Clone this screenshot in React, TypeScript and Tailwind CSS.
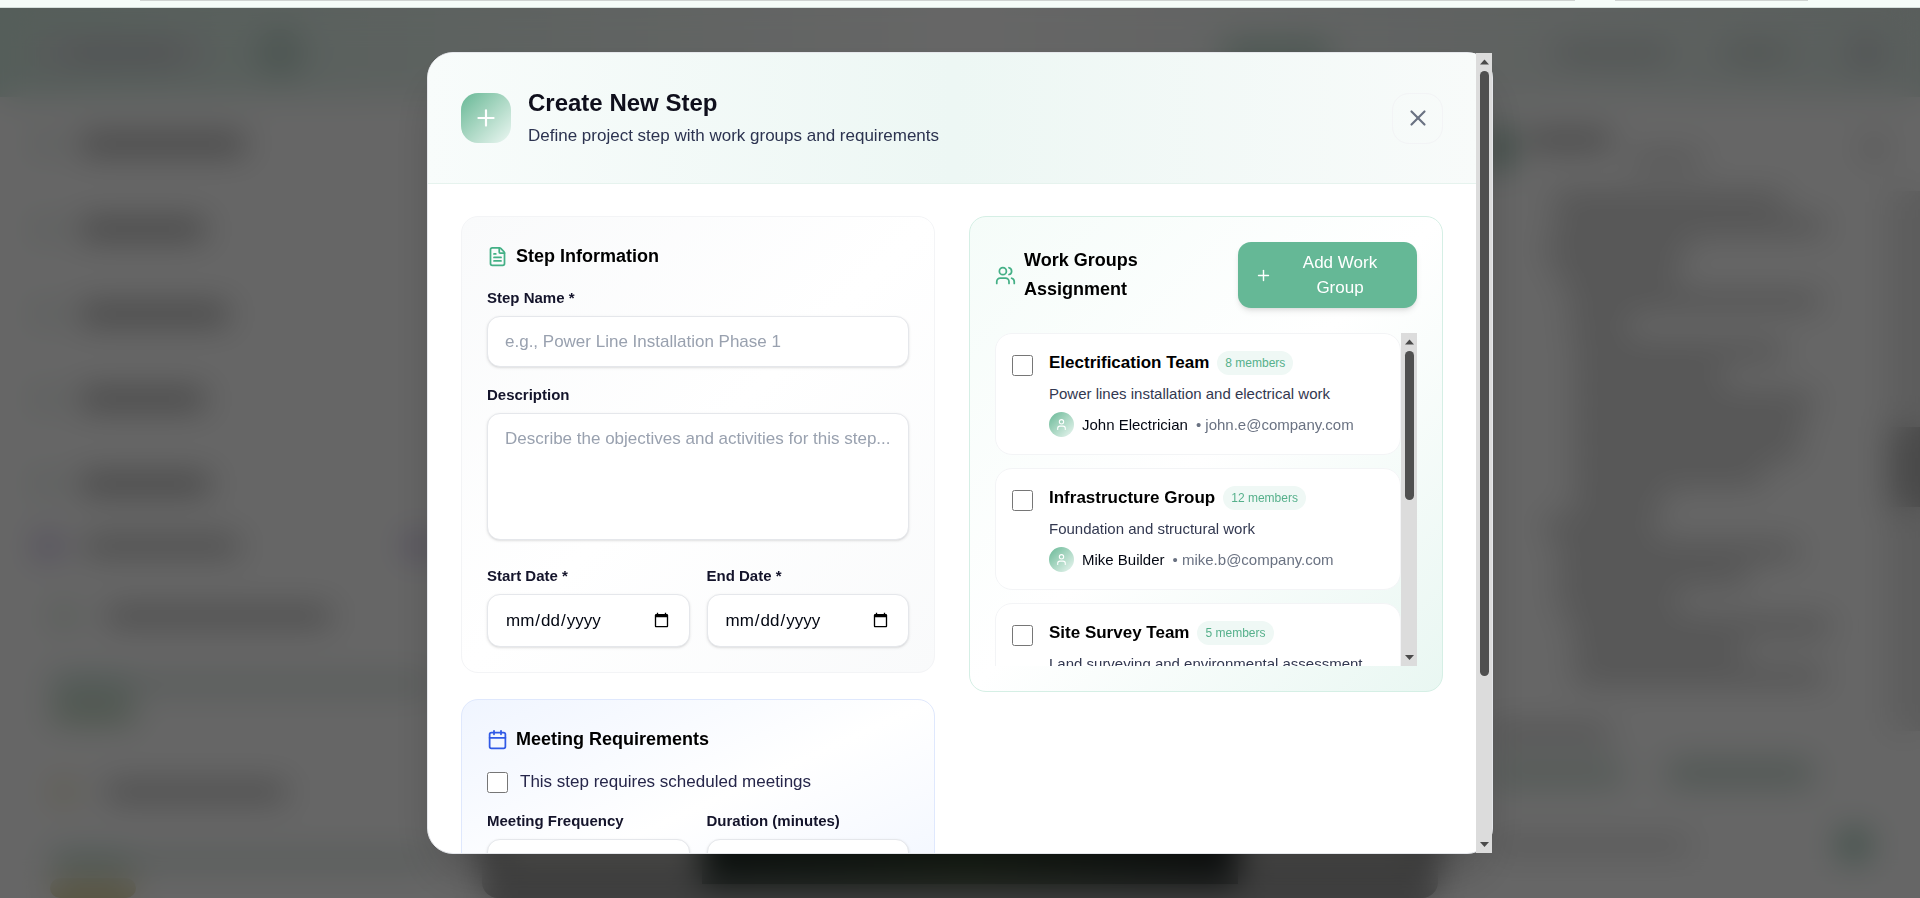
import { Calendar, FileText, Plus, User, Users, X } from 'lucide-react';
import { useEffect, useRef, useState } from 'react';
import type { ReactNode } from 'react';

type Group = { name: string; members: number; about: string; lead: string; email: string };

const groups: Group[] = [
  { name: 'Electrification Team', members: 8, about: 'Power lines installation and electrical work', lead: 'John Electrician', email: 'john.e@company.com' },
  { name: 'Infrastructure Group', members: 12, about: 'Foundation and structural work', lead: 'Mike Builder', email: 'mike.b@company.com' },
  { name: 'Site Survey Team', members: 5, about: 'Land surveying and environmental assessment', lead: 'Sarah Survey', email: 'sarah.s@company.com' },
];

const field =
  'block w-full rounded-[13px] border border-gray-200 bg-white px-[17px] text-[17px] text-gray-950 shadow-sm placeholder:text-gray-400';
const labelText = 'mb-2 block text-[15px] leading-[21px] font-bold text-[#14142b]';
const heading = 'text-lg leading-[29px] font-bold text-black';

/* A scrolling region with an always-visible arrow scroll bar on its right. */
function ScrollPane({ className, contentClass, children }: { className: string; contentClass: string; children: ReactNode }) {
  const pane = useRef<HTMLDivElement>(null);
  const [thumb, setThumb] = useState({ size: 50, start: 0 });

  const measure = () => {
    const el = pane.current;
    if (!el) return;
    setThumb({
      size: (el.clientHeight / el.scrollHeight) * 100,
      start: (el.scrollTop / el.scrollHeight) * 100,
    });
  };

  useEffect(() => {
    measure();
    window.addEventListener('resize', measure);
    return () => window.removeEventListener('resize', measure);
  }, []);

  return (
    <div className={`flex min-h-0 ${className}`}>
      <div ref={pane} onScroll={measure} className={`min-w-0 flex-1 overflow-y-auto [scrollbar-width:none] ${contentClass}`}>
        {children}
      </div>
      <div aria-hidden="true" className="flex w-4 shrink-0 flex-col items-center bg-[#dcdcdc]">
        <svg viewBox="0 0 15 18" className="h-[18px] w-[15px] shrink-0"><path d="M3 11.5 7.5 6.5 12 11.5z" fill="#4a4a4a" /></svg>
        <div className="min-h-0 w-[9px] flex-1">
          <div style={{ height: `${thumb.start}%` }} />
          <div className="rounded-full bg-[#505050]" style={{ height: `${thumb.size}%` }} />
        </div>
        <svg viewBox="0 0 15 18" className="h-[18px] w-[15px] shrink-0"><path d="M3 7 7.5 12 12 7z" fill="#4a4a4a" /></svg>
      </div>
    </div>
  );
}

function Field({ id, label, children }: { id: string; label: string; children: ReactNode }) {
  return (
    <div className="min-w-0">
      <label htmlFor={id} className={labelText}>{label}</label>
      {children}
    </div>
  );
}

const groupBox = 'rounded-[17px] border border-gray-100 bg-white';

function GroupCard({ group, id }: { group: Group; id: string }) {
  return (
    <li className={`${groupBox} flex items-start gap-4 px-4 py-[17px]`}>
      <input id={id} type="checkbox" className="mt-1 size-[21px] shrink-0" />
      <div className="min-w-0">
        <div className="mb-2 flex items-center gap-2">
          <label htmlFor={id} className="text-[17px] leading-6 font-bold text-black">{group.name}</label>
          <span className="rounded-full bg-[#eff8f5] px-2 text-xs leading-6 text-[#55b08b]">{group.members} members</span>
        </div>
        <p className="mb-2 text-[15px] leading-[21px] text-[#323850]">{group.about}</p>
        <div className="flex items-center gap-2 text-[15px] leading-[25px]">
          <span className="flex size-[25px] items-center justify-center rounded-full bg-linear-to-br from-[#65b896] to-[#ecf7f3]">
            <User size={13} className="text-white" />
          </span>
          <span className="text-gray-950">{group.lead}</span>
          <span className="text-gray-500">• {group.email}</span>
        </div>
      </div>
    </li>
  );
}

const sidebarRows = ['w-[165px]', 'w-[125px]', 'w-[148px]', 'w-[125px]', 'w-[130px]'];

const messageLines = [
  'ml-2 w-[230px]', 'ml-2 w-[270px]', 'ml-0 w-[140px]', 'ml-3 w-[120px]', 'ml-6 w-[250px]', 'ml-6 w-[60px]',
  'ml-7 w-[210px]', 'ml-7 w-[150px]', 'ml-7 w-[240px]', 'ml-7 w-[230px]', 'ml-7 w-[225px]', 'ml-7 w-[190px]',
  'ml-7 w-[90px]', 'ml-0 w-[110px]', 'ml-3 w-[240px]', 'ml-3 w-[190px]', 'ml-3 w-[120px]', 'ml-6 w-[260px]',
  'ml-7 w-[170px]', 'ml-7 w-[250px]',
];

function ProjectSkeleton({ dot, name, badge }: { dot: string; name: string; badge: string }) {
  return (
    <div className="h-[176px] pl-[50px]">
      <div className="flex items-center gap-8 pl-1">
        <span className={`size-5 rounded-full ${dot}`} />
        <span className={`h-4 rounded bg-[#b0b0b0] ${name}`} />
      </div>
      <div className="mt-[52px] flex h-3 rounded-full bg-[#c8d8d2]"><span className="w-20 rounded-full bg-[#9cc4b3]" /></div>
      <div className={`mt-3 h-5 w-[86px] rounded-full ${badge}`} />
    </div>
  );
}

/* The dashboard below the dialog, visible only as soft shapes. */
function Backdrop() {
  return (
    <div aria-hidden="true" className="flex h-full flex-col bg-white">
      <div className="flex h-2 shrink-0 gap-10 border-b border-[#d5dfdb] bg-[#f5fcf8] pr-28 pl-[140px]">
        <span className="flex-1 border-t border-[#cfd3d1]" />
        <span className="w-[193px] border-t border-[#cfd3d1]" />
      </div>
      <div className="mb-1 flex h-[89px] shrink-0 items-center bg-linear-to-r from-[#d4ebe1] via-white to-[#dfece7] pr-10 pl-8">
        <span className="h-9 w-44 rounded-xl bg-[#dce2e2] p-3"><span className="ml-6 block h-3 w-28 rounded bg-[#bfc3c8]" /></span>
        <span className="ml-12 size-12 rounded-full bg-[#c0d6cd]" />
        <span className="ml-auto h-6 w-28 rounded-full bg-[#b4d4c6]" />
        <span className="ml-56 h-4 w-28 rounded bg-[#c4cccb]" />
        <span className="ml-14 h-4 w-16 rounded bg-[#c4ceca]" />
        <span className="ml-16 size-7 rounded-full bg-[#c4c6cc]" />
      </div>
      <div className="flex min-h-0 flex-1">
        <div className="w-[430px] shrink-0 overflow-hidden">
          {sidebarRows.map((width, index) => (
            <div key={index} className="flex h-[85px] items-center gap-6 pl-9">
              <span className="size-5 rounded-full bg-[#d3e4dc]" />
              <span className={`h-[18px] rounded bg-[#a4a4a4] ${width}`} />
            </div>
          ))}
          <div className="mb-10 flex h-10 items-center gap-6 pl-9">
            <span className="size-6 rounded-full bg-[#bba8de]" />
            <span className="h-4 w-[155px] rounded bg-[#b2b2b2]" />
            <span className="ml-auto size-6 rounded-full bg-[#bba8de]" />
          </div>
          <ProjectSkeleton dot="bg-[#c0d8c4]" name="w-[225px]" badge="bg-[#b4ceb4]" />
          <ProjectSkeleton dot="bg-[#e5d6a0]" name="w-[180px]" badge="bg-[#ded6a8]" />
        </div>
        <div className="flex min-w-0 flex-1 flex-col justify-end px-[52px]">
          <div className="flex h-[90px] items-start rounded-b-2xl bg-[#a0a0a0] px-5 pb-5">
            <span className="h-14 w-[200px] bg-[#d8d8d2]" />
            <span className="h-[76px] flex-1 bg-linear-to-r from-[#26332e] via-[#34452f] to-[#262c2c]" />
            <span className="h-14 w-[180px] bg-[#c8c8c4]" />
          </div>
        </div>
        <div className="flex w-[430px] shrink-0">
          <div className="min-w-0 flex-1">
            <div className="flex h-[94px] items-center pr-1">
              <span className="h-12 w-5 rounded-xl bg-[#7fae99]" />
              <span className="ml-4 mb-4 h-4 w-[85px] rounded bg-[#a8a8a8]" />
              <span className="ml-5 mt-6 h-3 w-[70px] rounded bg-[#c4c4c4]" />
              <span className="ml-auto size-5 rounded-full bg-[#c4c4c4]" />
            </div>
            <div className="flex h-[520px] flex-col gap-[13px] overflow-hidden pl-14">
              {messageLines.map((line, index) => (
                <span key={index} className={`h-3 shrink-0 rounded bg-[#b4b4b4] ${line}`} />
              ))}
            </div>
            <div className="mt-3 h-3 w-[120px] rounded bg-[#b8b8b8]" />
            <div className="mt-5 flex gap-10">
              <span className="h-7 w-[135px] rounded-full bg-[#d3e2da]" />
              <span className="h-7 w-[150px] rounded-full bg-[#cbdbd3]" />
            </div>
            <div className="mt-10 flex items-center pr-4">
              <span className="h-3 w-[200px] rounded bg-[#cccccc]" />
              <span className="ml-auto size-9 rounded-full bg-[#a5cbba]" />
            </div>
          </div>
          <div className="mt-[90px] h-[540px] w-8 bg-[#e8e8e8] pt-[236px]"><div className="h-[80px] w-8 bg-[#b8b8b8]" /></div>
        </div>
      </div>
    </div>
  );
}

export default function App() {
  return (
    <div className="relative h-screen overflow-hidden font-['Liberation_Sans',Arial,sans-serif]">
      <Backdrop />
      <div className="absolute inset-x-0 top-2 bottom-0 flex items-center justify-center bg-black/60 backdrop-blur-lg">
        <section
          role="dialog"
          aria-labelledby="dialog-title"
          className="flex max-h-[calc(100%-88px)] w-full max-w-[1066px] rounded-[26px] border border-gray-200 bg-white shadow-2xl"
        >
          <ScrollPane className="flex-1" contentClass="rounded-l-[25px] rounded-r-[3px]">
            <header className="flex items-center justify-between border-b border-[#e6f3ee] bg-linear-to-r from-[#f8fcfb] via-[#edf7f4] to-[#f8fbfa] px-[33px] py-8">
              <div className="flex items-center gap-[17px]">
                <span className="flex size-[50px] items-center justify-center rounded-[17px] bg-linear-to-br from-[#65b896] to-[#ecf7f3]">
                  <Plus size={26} className="text-white" />
                </span>
                <div>
                  <h2 id="dialog-title" className="text-2xl leading-9 font-bold text-[#0f0f1c]">Create New Step</h2>
                  <p className="text-[17px] leading-[30px] text-[#2c3350]">Define project step with work groups and requirements</p>
                </div>
              </div>
              <button type="button" aria-label="Close" className="flex size-[51px] items-center justify-center rounded-[17px] border border-gray-100 text-gray-500">
                <X size={26} />
              </button>
            </header>

            <div className="grid grid-cols-2 items-start gap-[34px] px-[33px] py-8">
              <div className="flex flex-col gap-[26px]">
                <section className="rounded-[17px] border border-gray-100 bg-linear-to-br from-[#f9fafb] via-white to-[#f9fafb] p-[25px]">
                  <div className="mb-4 flex items-center gap-2">
                    <FileText size={21} className="text-[#44b086]" />
                    <h3 className={heading}>Step Information</h3>
                  </div>
                  <div className="flex flex-col gap-[17px]">
                    <Field id="name" label="Step Name *">
                      <input id="name" type="text" placeholder="e.g., Power Line Installation Phase 1" className={`${field} h-[51px]`} />
                    </Field>
                    <Field id="description" label="Description">
                      <textarea id="description" placeholder="Describe the objectives and activities for this step..." className={`${field} mb-2 h-[127px] resize-none py-3 leading-[26px]`} />
                    </Field>
                    <div className="grid grid-cols-2 gap-[17px]">
                      <Field id="start" label="Start Date *">
                        <input id="start" type="date" className={`${field} h-[53px]`} />
                      </Field>
                      <Field id="end" label="End Date *">
                        <input id="end" type="date" className={`${field} h-[53px]`} />
                      </Field>
                    </div>
                  </div>
                </section>

                <section className="rounded-[17px] border border-[#dfe8fd] bg-linear-to-br from-[#f0f5ff] via-white to-[#f0f5ff] p-[25px]">
                  <div className="mb-4 flex items-center gap-2">
                    <Calendar size={21} className="text-[#3059e6]" />
                    <h3 className={heading}>Meeting Requirements</h3>
                  </div>
                  <label className="mb-4 flex items-center gap-3 text-[17px] leading-6 text-[#26264a]">
                    <input type="checkbox" className="size-[21px]" />
                    This step requires scheduled meetings
                  </label>
                  <div className="grid grid-cols-2 gap-[17px]">
                    <Field id="frequency" label="Meeting Frequency">
                      <select id="frequency" className={`${field} h-[51px] appearance-none`}><option>Weekly</option></select>
                    </Field>
                    <Field id="duration" label="Duration (minutes)">
                      <input id="duration" type="number" className={`${field} h-[51px]`} />
                    </Field>
                  </div>
                </section>
              </div>

              <section className="rounded-[17px] border border-[#d5efe5] bg-linear-to-br from-[#f5fcf9] via-white to-[#e9f7f2] p-[25px]">
                <div className="mb-[25px] flex items-center justify-between">
                  <div className="flex items-center gap-2">
                    <Users size={21} className="shrink-0 text-[#44b086]" />
                    <h3 className={`${heading} w-32`}>Work Groups Assignment</h3>
                  </div>
                  <button type="button" className="flex w-[179px] items-center gap-2 rounded-[13px] bg-[#65b896] px-[17px] py-2 text-[17px] leading-[25px] text-white shadow-md">
                    <Plus size={17} className="shrink-0" />
                    <span className="flex-1 px-3">Add Work Group</span>
                  </button>
                </div>
                <ScrollPane className="h-[333px]" contentClass="">
                  <ul className="flex flex-col gap-[13px]">
                    {groups.map((group, index) => (
                      <GroupCard key={group.name} group={group} id={`group-${index}`} />
                    ))}
                    <li aria-hidden="true" className={`${groupBox} h-[122px]`} />
                    <li aria-hidden="true" className={`${groupBox} h-[122px]`} />
                  </ul>
                </ScrollPane>
              </section>
            </div>

            <footer className="flex justify-end gap-[17px] border-t border-gray-100 px-[33px] py-8 text-[17px]">
              <button type="button" className="h-[51px] rounded-[13px] border border-gray-200 px-6 text-gray-700">Cancel</button>
              <button type="button" className="h-[51px] rounded-[13px] bg-[#65b896] px-6 text-white">Create Step</button>
            </footer>
          </ScrollPane>
        </section>
      </div>
    </div>
  );
}
